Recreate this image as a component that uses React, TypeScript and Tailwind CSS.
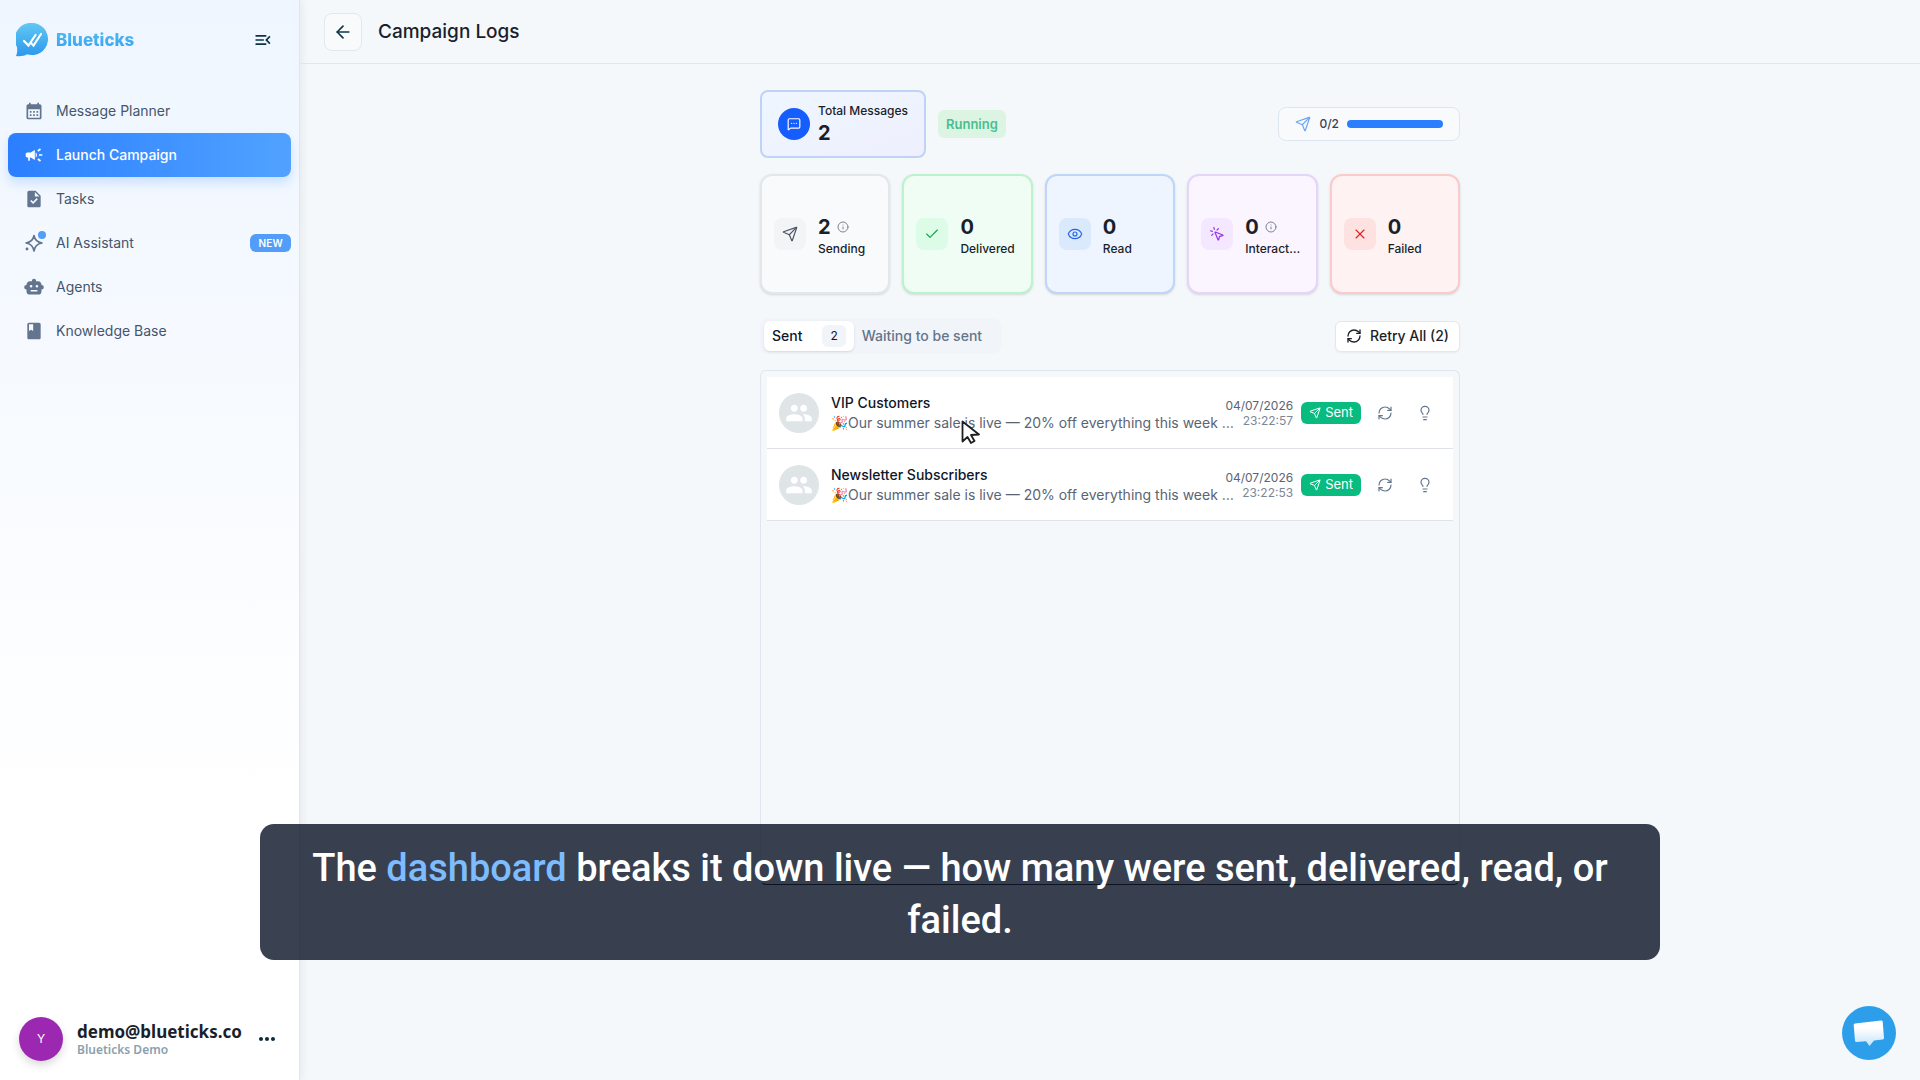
import type { ComponentType, ReactNode } from 'react';
import {
    ArrowLeft,
    Check,
    Eye,
    Info,
    Lightbulb,
    MessageSquareMore,
    MousePointerClick,
    RefreshCw,
    Send,
    X,
} from 'lucide-react';
import { MdBook, MdCalendarMonth, MdCampaign, MdGroup, MdMenuOpen, MdMoreHoriz, MdTask } from 'react-icons/md';

interface NavItem {
    label: string;
    icon: ReactNode;
    active?: boolean;
    isNew?: boolean;
}

interface Stat {
    label: string;
    value: number;
    icon: ComponentType<{ className?: string; strokeWidth?: number }>;
    card: string;
    badge: string;
    info?: boolean;
}

interface Message {
    name: string;
    text: string;
    date: string;
    time: string;
}

const RobotIcon = () => (
    <svg viewBox="0 0 24 24" className="size-5" fill="currentColor" aria-hidden="true">
        <path
            fillRule="evenodd"
            d="M12 2a2.500 2.500 0 0 1 2.400 3.200H17a4 4 0 0 1 4 4.300 2.800 2.800 0 0 1 0 5.600V17a4 4 0 0 1-4 4H7a4 4 0 0 1-4-4v-1.900a2.800 2.800 0 0 1 0-5.600A4 4 0 0 1 7 5.200h2.600A2.500 2.500 0 0 1 12 2ZM8.500 9.500a1.600 1.600 0 1 0 0 3.200 1.600 1.600 0 0 0 0-3.200Zm7 0a1.600 1.600 0 1 0 0 3.200 1.600 1.600 0 0 0 0-3.200ZM8 15.500v1.800h8v-1.800H8Z"
        />
    </svg>
);

const SparkIcon = () => (
    <span className="relative block size-5">
        <svg viewBox="0 0 20 20" className="size-5" fill="none" stroke="currentColor" strokeWidth="1.6" aria-hidden="true">
            <path strokeLinejoin="round" d="M10 2.500c.8 4.500 3 6.700 8 7.500-5 .8-7.200 3-8 8-.8-5-3-7.200-8-8 5-.8 7.200-3 8-7.500Z" />
            <circle cx="3" cy="16" r="1.400" fill="currentColor" stroke="none" />
        </svg>
        <span className="absolute -top-0.5 -right-0.5 size-2 rounded-full bg-[#529df8]" />
    </span>
);

const navItems: NavItem[] = [
    { label: 'Message Planner', icon: <MdCalendarMonth className="size-5" /> },
    { label: 'Launch Campaign', icon: <MdCampaign className="size-5" />, active: true },
    { label: 'Tasks', icon: <MdTask className="size-5" /> },
    { label: 'AI Assistant', icon: <SparkIcon />, isNew: true },
    { label: 'Agents', icon: <RobotIcon /> },
    { label: 'Knowledge Base', icon: <MdBook className="size-5" /> },
];

const stats: Stat[] = [
    { label: 'Sending', value: 2, icon: Send, card: 'border-[#e2e7ec] bg-[#f9fafc]', badge: 'bg-[#f3f4f6] text-[#4b5563]', info: true },
    { label: 'Delivered', value: 0, icon: Check, card: 'border-[#bdf2cf] bg-[#f0fdf4]', badge: 'bg-[#dcfce7] text-[#16a34a]' },
    { label: 'Read', value: 0, icon: Eye, card: 'border-[#bfd6f8] bg-[#eef5ff]', badge: 'bg-[#dbe9fc] text-[#2563eb]' },
    { label: 'Interact…', value: 0, icon: MousePointerClick, card: 'border-[#e5d5f8] bg-[#faf5ff]', badge: 'bg-[#f3e8ff] text-[#9333ea]', info: true },
    { label: 'Failed', value: 0, icon: X, card: 'border-[#fbcaca] bg-[#fef2f2]', badge: 'bg-[#fee2e2] text-[#dc2626]' },
];

const messages: Message[] = [
    {
        name: 'VIP Customers',
        text: '🎉Our summer sale is live — 20% off everything this week …',
        date: '04/07/2026',
        time: '23:22:57',
    },
    {
        name: 'Newsletter Subscribers',
        text: '🎉Our summer sale is live — 20% off everything this week …',
        date: '04/07/2026',
        time: '23:22:53',
    },
];

const Logo = () => (
    <svg viewBox="0 0 32 34" className="h-[34px] w-8" aria-hidden="true">
        <defs>
            <linearGradient id="logo" x1="0" y1="0" x2="0" y2="1">
                <stop offset="0" stopColor="#62c8f2" />
                <stop offset="1" stopColor="#2b98ee" />
            </linearGradient>
        </defs>
        <path fill="url(#logo)" d="M16 0a16 16 0 1 1-5 31.200C8 33 4 33.500 0 33c1-2 1.500-5 1-9A16 16 0 0 1 16 0Z" />
        <path
            fill="none"
            stroke="#fff"
            strokeWidth="2.200"
            strokeLinecap="round"
            d="m8 18 4.500 4.500L19.500 12M15.500 20.500l2 2L25 11"
        />
    </svg>
);

const Sidebar = () => (
    <aside className="flex w-[300px] shrink-0 flex-col border-r border-[#dfe6ee] bg-linear-to-b from-[#eff6ff] to-white to-75% shadow-[2px_0_8px_rgba(15,23,42,0.06)]">
        <div className="flex h-20 items-center pr-[26px] pl-4">
            <Logo />
            <span className="ml-2 bg-linear-to-b from-[#58c2f2] to-[#2f9bee] bg-clip-text text-[17px] leading-7 font-extrabold text-transparent">
                Blueticks
            </span>
            <button aria-label="Collapse menu" className="ml-auto text-[#0c3547]">
                <MdMenuOpen className="size-5" />
            </button>
        </div>
        <nav className="mt-[9px] flex flex-col px-2">
            {navItems.map((item) => (
                <a
                    key={item.label}
                    href="#"
                    className={
                        item.active
                            ? 'flex h-11 items-center gap-3 rounded-lg bg-linear-to-r from-[#2b7fff] to-[#51a2ff] pl-4 text-sm font-medium text-white shadow-[0_6px_12px_rgba(43,127,255,0.2)]'
                            : 'flex h-11 items-center gap-3 rounded-lg pl-4 text-sm text-[#45556c]'
                    }
                >
                    <span className={item.active ? 'text-white' : 'text-[#62748e]'}>{item.icon}</span>
                    {item.label}
                    {item.isNew && (
                        <span className="ml-auto rounded-md bg-[#529df8] px-2 text-[10px] leading-[18px] font-semibold tracking-wide text-white">
                            NEW
                        </span>
                    )}
                </a>
            ))}
        </nav>
        <div className="mt-auto flex items-center pr-5 pb-[19px] pl-[19px]">
            <div className="flex size-11 items-center justify-center rounded-full bg-[#9c27b0] text-xs text-white shadow-[0_4px_8px_rgba(0,0,0,0.15)]">
                Y
            </div>
            <div className="ml-3.5 pt-0.5 font-['Noto_Sans',sans-serif]">
                <div className="text-[17px] leading-5 font-bold text-[#1a1f2b]">demo@blueticks.co</div>
                <div className="text-xs leading-4 font-semibold text-[#8ca0ad]">Blueticks Demo</div>
            </div>
            <button aria-label="Account options" className="ml-auto text-[#0c2b3b]">
                <MdMoreHoriz className="size-6" />
            </button>
        </div>
    </aside>
);

const StatCard = ({ stat }: { stat: Stat }) => {
    const Icon = stat.icon;
    return (
        <div className={`flex h-[120px] min-w-0 flex-1 items-center gap-3 rounded-xl border-2 px-3 shadow-sm ${stat.card}`}>
            <div className={`flex size-8 shrink-0 items-center justify-center rounded-lg ${stat.badge}`}>
                <Icon className="size-4" strokeWidth={1.75} />
            </div>
            <div className="mt-1.5 min-w-0">
                <div className="flex items-center gap-1.5 text-xl leading-6 font-bold text-[#1a1f2b]">
                    {stat.value}
                    {stat.info && <Info className="size-3 text-[#6b7280]" strokeWidth={1.75} />}
                </div>
                <div className="text-xs leading-5 font-medium text-[#1a1f2b]">{stat.label}</div>
            </div>
        </div>
    );
};

const MessageRow = ({ message }: { message: Message }) => (
    <li className="flex h-[72px] items-center border-b border-[#dfe3e8] bg-white pr-5 pl-3">
        <div className="flex size-10 shrink-0 items-center justify-center rounded-full bg-[#dfe5e7] text-white">
            <MdGroup className="size-7" />
        </div>
        <div className="ml-3 min-w-0 flex-1">
            <div className="text-sm leading-5 font-medium text-[#0f172a]">{message.name}</div>
            <div className="text-sm leading-5 whitespace-nowrap text-[#5a6474]">{message.text}</div>
        </div>
        <div className="ml-1 shrink-0 text-right text-xs leading-[15px] text-[#5a6474]">
            <div>{message.date}</div>
            <div className="text-[#7b8796]">{message.time}</div>
        </div>
        <span className="ml-2 flex h-[22px] shrink-0 items-center gap-1 rounded-md bg-[#0abb80] px-2 text-[13px] text-white">
            <Send className="size-3" strokeWidth={2} />
            Sent
        </span>
        <button aria-label="Retry" className="ml-4 shrink-0 text-[#64748b]">
            <RefreshCw className="size-4" strokeWidth={1.75} />
        </button>
        <button aria-label="Details" className="ml-6 shrink-0 text-[#64748b]">
            <Lightbulb className="size-4" strokeWidth={1.75} />
        </button>
    </li>
);

const CampaignLogs = () => (
    <section className="mx-auto w-full max-w-[700px] pt-[26px]">
        <div className="flex items-center">
            <div className="flex h-[68px] items-center gap-2 rounded-lg border-2 border-[#bfd3f5] bg-linear-to-br from-[#eff6ff] to-[#eef0fd] px-4">
                <div className="flex size-8 items-center justify-center rounded-full bg-[#155dfc] text-white">
                    <MessageSquareMore className="size-3.5" strokeWidth={2} />
                </div>
                <div className="mb-0.5 text-[#1a1f2b]">
                    <div className="text-xs leading-5 font-medium">Total Messages</div>
                    <div className="text-xl leading-6 font-bold">2</div>
                </div>
            </div>
            <span className="ml-3 rounded-md bg-[#dcf4e2] px-2 py-1 text-[13px] leading-5 font-semibold text-[#48bf91]">
                Running
            </span>
            <div className="ml-auto flex h-[34px] items-center gap-2 rounded-lg border border-[#dde7f1] bg-[#f8fafc] px-4 text-xs font-medium text-[#374151]">
                <Send className="size-4 text-[#6ea4ef]" strokeWidth={1.75} />
                <span>0/2</span>
                <div className="h-2 w-24 rounded-full bg-[#2b7fff]" />
            </div>
        </div>

        <div className="mt-4 flex gap-3">
            {stats.map((stat) => (
                <StatCard key={stat.label} stat={stat} />
            ))}
        </div>

        <div className="mt-6 flex items-center justify-between">
            <div role="tablist" className="flex h-9 items-center rounded-lg bg-[#f1f5f9] px-1 text-sm font-medium">
                <button
                    role="tab"
                    aria-selected="true"
                    className="flex h-[30px] items-center gap-5 rounded-md bg-white px-2 text-[#0f172a] shadow-sm"
                >
                    Sent
                    <span className="rounded-md bg-[#f1f5f9] px-2 text-xs leading-[22px] font-normal">2</span>
                </button>
                <button role="tab" aria-selected="false" className="pr-4 pl-2 text-[#64748b]">
                    Waiting to be sent
                </button>
            </div>
            <button className="flex h-[31px] items-center gap-2 rounded-md border border-[#e2e8f0] bg-white px-2.5 text-sm font-medium text-[#1a1f2b] shadow-xs">
                <RefreshCw className="size-4" strokeWidth={2} />
                Retry All (2)
            </button>
        </div>

        <ul className="mt-4 min-h-[515px] rounded-md border border-[#dfe6ee] border-b-black p-1.5">
            {messages.map((message) => (
                <MessageRow key={message.name} message={message} />
            ))}
        </ul>
    </section>
);

const Caption = () => (
    <div className="absolute inset-x-0 bottom-[120px] mx-auto w-[1400px] max-w-full rounded-[14px] bg-[#0f172a]/82 px-12 pt-[18px] pb-3.5 text-center font-['Roboto',sans-serif] text-[38px] leading-[52px] font-medium text-white">
        The <span className="text-[#7cbcff]">dashboard</span> breaks it down live — how many were sent, delivered, read, or
        failed.
    </div>
);

const Cursor = () => (
    <svg viewBox="0 0 20 24" className="pointer-events-none absolute top-[420px] left-[961px] h-6 w-5" aria-hidden="true">
        <path
            d="M1.500 1.500v20l5-4.500 3.500 6 3.500-2-3.500-6 8-.5-16.500-13Z"
            fill="#fff"
            stroke="#1f1f1f"
            strokeWidth="1.800"
            strokeLinejoin="round"
        />
    </svg>
);

export default function App() {
    return (
        <div className="relative flex min-h-screen overflow-hidden bg-[#f4f8fb] font-['Inter',sans-serif]">
            <Sidebar />
            <main className="min-w-0 flex-1">
                <header className="flex h-16 items-center gap-4 border-b border-[#dfe6ee] px-6">
                    <button
                        aria-label="Back"
                        className="flex size-[38px] items-center justify-center rounded-lg border border-[#e2e8f0] bg-[#f8fafc] text-[#0c3547]"
                    >
                        <ArrowLeft className="size-5" />
                    </button>
                    <h1 className="text-[19px] leading-7 font-medium text-[#1a1f2b]">Campaign Logs</h1>
                </header>
                <CampaignLogs />
            </main>
            <Cursor />
            <Caption />
            <button
                aria-label="Open chat"
                className="absolute right-6 bottom-5 flex size-[54px] items-center justify-center rounded-full bg-[#2d9fea]"
            >
                <svg viewBox="0 0 32 28" className="h-7 w-8" aria-hidden="true">
                    <defs>
                        <linearGradient id="chat" x1="0" y1="0" x2="0" y2="1">
                            <stop offset="0.300" stopColor="#fff" />
                            <stop offset="1" stopColor="#c4e3fa" />
                        </linearGradient>
                    </defs>
                    <path
                        fill="url(#chat)"
                        d="M2 4.500 28 1.500a1.500 1.500 0 0 1 1.700 1.300L31 19a1.500 1.500 0 0 1-1.300 1.600L21 21.500l-4.500 5.500L13 22.300l-9.300.7A1.500 1.500 0 0 1 2 21.700L.7 6A1.500 1.500 0 0 1 2 4.500Z"
                    />
                </svg>
            </button>
        </div>
    );
}
